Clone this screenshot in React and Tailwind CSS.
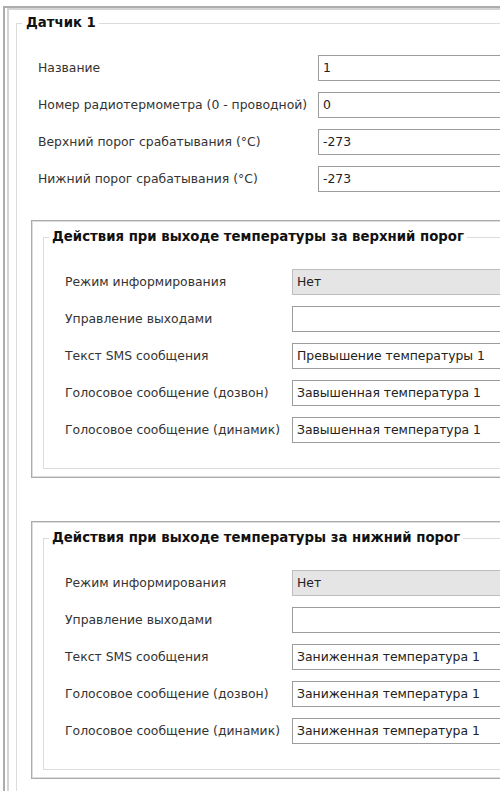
import React from "react";

const topRows = [
  ["Название", "1"],
  ["Номер радиотермометра (0 - проводной)", "0"],
  ["Верхний порог срабатывания (°C)", "-273"],
  ["Нижний порог срабатывания (°C)", "-273"],
];

const upperRows = [
  ["Текст SMS сообщения", "Превышение температуры 1"],
  ["Голосовое сообщение (дозвон)", "Завышенная температура 1"],
  ["Голосовое сообщение (динамик)", "Завышенная температура 1"],
];

const lowerRows = [
  ["Текст SMS сообщения", "Заниженная температура 1"],
  ["Голосовое сообщение (дозвон)", "Заниженная температура 1"],
  ["Голосовое сообщение (динамик)", "Заниженная температура 1"],
];

const Field = ({ value, disabled }) => (
  <div
    className={`h-[26px] flex-1 flex items-center pl-[4px] border ${
      disabled ? "bg-[#e5e5e5] border-[#bdbdbd]" : "bg-white border-[#9c9c9c]"
    } text-[#222]`}
  >
    {value}
  </div>
);

const ActionBox = ({ title, rows }) => (
  <div className="border border-[#ababab] shadow-[inset_0_0_0_1px_#dddddd] pl-[11px] pt-[8px] pb-[8px]">
    <fieldset className="border border-[#dcdcdc] pb-[25px]">
      <legend className="ml-[5px] pl-[3px] pr-[3px] leading-[16px] font-bold text-[13.3px] text-[#111]">{title}</legend>
      <div className="pt-[24px] pl-[21px] flex flex-col gap-[11px]">
        <div className="flex items-center">
          <div className="w-[227px]">Режим информирования</div>
          <Field value="Нет" disabled />
        </div>
        <div className="flex items-center">
          <div className="w-[227px]">Управление выходами</div>
          <Field value="" />
        </div>
        {rows.map(([label, value], i) => (
          <div className="flex items-center" key={i}>
            <div className="w-[227px]">{label}</div>
            <Field value={value} />
          </div>
        ))}
      </div>
    </fieldset>
  </div>
);

export default function App() {
  return (
    <div className="w-[500px] h-[791px] overflow-hidden bg-white font-['DejaVu_Sans',sans-serif] text-[12.4px] text-[#333]">
      <div className="ml-[3px] mt-[6px] w-[700px] h-[900px] border-l-2 border-t-2 border-[#adadad]">
        <div className="ml-[2px] h-full border-l-2 border-t-2 border-[#d4d4d4]">
          <fieldset className="ml-[7px] mt-[5px] border border-[#dcdcdc] pb-[40px]">
            <legend className="ml-[5px] pl-[4px] pr-[3px] leading-[16px] font-bold text-[13.3px] text-[#111]">Датчик 1</legend>

            <div className="pl-[14px]">
              <div className="pt-[24px] pl-[7px] flex flex-col gap-[11px]">
                {topRows.map(([label, value], i) => (
                  <div className="flex items-center" key={i}>
                    <div className="w-[280px]">{label}</div>
                    <Field value={value} />
                  </div>
                ))}
              </div>

              <div className="mt-[28px]">
                <ActionBox title="Действия при выходе температуры за верхний порог" rows={upperRows} />
              </div>
              <div className="mt-[43px]">
                <ActionBox title="Действия при выходе температуры за нижний порог" rows={lowerRows} />
              </div>
            </div>
          </fieldset>
        </div>
      </div>
    </div>
  );
}
